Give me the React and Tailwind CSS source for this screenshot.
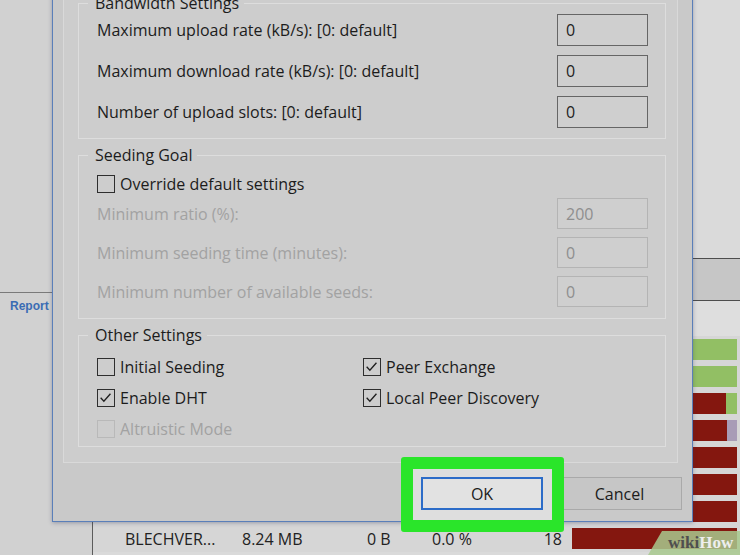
import React from 'react';
import clsx from 'clsx';

const rows = [
  { red: 0, tail: 'bg-[#92bf64]' },
  { red: 0, tail: 'bg-[#92bf64]' },
  { red: 154, tail: 'bg-[#92bf64]' },
  { red: 155, tail: 'bg-[#a89cb6]' },
  { red: 165 },
  { red: 165 },
  { red: 165 },
  { red: 165, name: 'BLECHVER...', size: '8.24 MB', down: '0 B', pct: '0.0 %', seeds: '18' },
];

const CheckBox = ({ checked, disabled }) => (
  <span
    className={clsx(
      'flex h-[18px] w-[18px] shrink-0 items-center justify-center border',
      disabled ? 'border-[#b9b9b9]' : 'border-[#2e2e2e]'
    )}
  >
    {checked && (
      <svg viewBox="0 0 18 18" className="h-[16px] w-[16px]">
        <path d="M3 8.8 L6.6 12.6 L14 4.2" fill="none" stroke="#1f1f1f" strokeWidth="1.5" />
      </svg>
    )}
  </span>
);

const Option = ({ label, checked, disabled }) => (
  <div className="flex h-[24px] items-center gap-[5px]">
    <CheckBox checked={checked} disabled={disabled} />
    <span className={disabled ? 'text-[#a2a2a2]' : 'text-[#1c1c1c]'}>{label}</span>
  </div>
);

const Field = ({ label, value, disabled, tall }) => (
  <div className={clsx('flex items-center justify-between', tall ? 'h-[32px]' : 'h-[31px]')}>
    <span className={disabled ? 'text-[#a2a2a2]' : 'text-[#1c1c1c]'}>{label}</span>
    <div
      className={clsx(
        'flex h-full w-[91px] items-center border pl-[8px] bg-[#cfcfcf]',
        disabled ? 'border-[#b4b4b4] text-[#8e8e8e]' : 'border-[#666] text-[#222]'
      )}
    >
      {value}
    </div>
  </div>
);

const Group = ({ title, className, children }) => (
  <fieldset className={clsx('border border-[#dddddd]', className)}>
    <legend className="ml-[9px] pl-[7px] pr-[5px] leading-[20px] text-[#1c1c1c]">{title}</legend>
    {children}
  </fieldset>
);

export default function App() {
  return (
    <div className="relative h-[555px] w-[740px] overflow-hidden bg-[#d3d3d3] font-['Open_Sans',sans-serif] text-[16px] leading-[20px]">
      {/* app behind the dialog */}
      <div className="flex h-full">
        <div className="w-[93px] shrink-0 border-r border-[#5c5c5c] bg-[#d1d1d1]">
          <div className="h-[293px] border-b border-[#7a7a7a]" />
          <div className="pl-[10px] pt-[3px] text-[12px] font-bold text-[#3a6cb4] font-['Liberation_Sans',sans-serif]">
            Report
          </div>
        </div>
        <div className="flex flex-1 flex-col bg-[#dadada]">
          <div className="h-[258px]" />
          <div className="h-[43px] border-y border-[#4d4d4d] bg-[#c6c6c6]" />
          <div className="h-[35px] bg-[#dedede]" />
          {rows.map((r, i) => (
            <div key={i} className="flex h-[27px] items-center pl-[32px] text-[#222] bg-[#d6d6d6]">
              <span className="w-[117px]">{r.name}</span>
              <span className="w-[125px]">{r.size}</span>
              <span className="w-[65px]">{r.down}</span>
              <span className="w-[90px]">{r.pct}</span>
              <span className="w-[40px] text-right">{r.seeds}</span>
              <div className="ml-[10px] flex h-[21px] w-[165px]">
                <div className="h-full bg-[#84170f]" style={{ width: r.red }} />
                {r.tail && <div className={clsx('h-full flex-1', r.tail)} />}
              </div>
            </div>
          ))}
        </div>
      </div>

      {/* Torrent properties dialog */}
      <div className="absolute left-[52px] top-[-34px] w-[641px] border border-[#5a7fb9] bg-[#c9c9c9] pl-[10px] pr-[14px] pt-[10px] pb-[11px] shadow-[0_1px_4px_rgba(40,50,90,0.35)]">
        <div className="border border-[#d9d9d9] bg-[#cdcdcd] pl-[14px] pr-[11px] pt-[15px] pb-[15px]">
          <Group title="Bandwidth Settings">
            <div className="flex flex-col gap-[9px] pl-[18px] pr-[17px] pt-[1px] pb-[10px]">
              <Field tall label="Maximum upload rate (kB/s): [0: default]" value="0" />
              <Field tall label="Maximum download rate (kB/s): [0: default]" value="0" />
              <Field tall label="Number of upload slots: [0: default]" value="0" />
            </div>
          </Group>

          <Group title="Seeding Goal" className="mt-[6px]">
            <div className="pl-[18px] pr-[17px] pt-[8px] pb-[11px]">
              <div className="flex h-[22px] items-center">
                <Option label="Override default settings" />
              </div>
              <div className="mt-[3px] flex flex-col gap-[8px]">
                <Field disabled label="Minimum ratio (%):" value="200" />
                <Field disabled label="Minimum seeding time (minutes):" value="0" />
                <Field disabled label="Minimum number of available seeds:" value="0" />
              </div>
            </div>
          </Group>

          <Group title="Other Settings" className="mt-[6px]">
            <div className="grid grid-cols-[266px_1fr] gap-y-[7px] pl-[18px] pt-[10px] pb-[5px]">
              <Option label="Initial Seeding" />
              <Option label="Peer Exchange" checked />
              <Option label="Enable DHT" checked />
              <Option label="Local Peer Discovery" checked />
              <Option label="Altruistic Mode" disabled />
            </div>
          </Group>
        </div>

        <div className="mt-[14px] -mr-[4px] flex justify-end gap-[14px]">
          <button className="relative z-10 flex h-[33px] w-[122px] items-center justify-center border-2 border-[#2c6cc8] bg-[#e2e2e2] text-[#1c1c1c]">
            OK
          </button>
          <button className="flex h-[33px] w-[125px] items-center justify-center border border-[#a9a9a9] bg-[#c6c6c6] text-[#1c1c1c]">
            Cancel
          </button>
        </div>
      </div>

      {/* highlight around OK */}
      <div className="absolute left-[401px] top-[457px] h-[75px] w-[163px] rounded-[3px] border-[12px] border-[#2ae52a] bg-white/40" />

      {/* watermark */}
      <div className="absolute bottom-0 right-0 h-[24px] w-[92px]">
        <svg viewBox="0 0 92 24" className="absolute inset-0 h-full w-full">
          <polygon points="14,0 92,0 92,24 0,24" fill="#a8c98e" opacity="0.85" />
        </svg>
        <div className="relative pl-[20px] pt-[2px] text-[17px] font-bold leading-[20px] font-['Liberation_Serif',serif]">
          <span className="text-[#4f4f4f]">wiki</span>
          <span className="text-[#eeeeee]">How</span>
        </div>
      </div>
    </div>
  );
}
